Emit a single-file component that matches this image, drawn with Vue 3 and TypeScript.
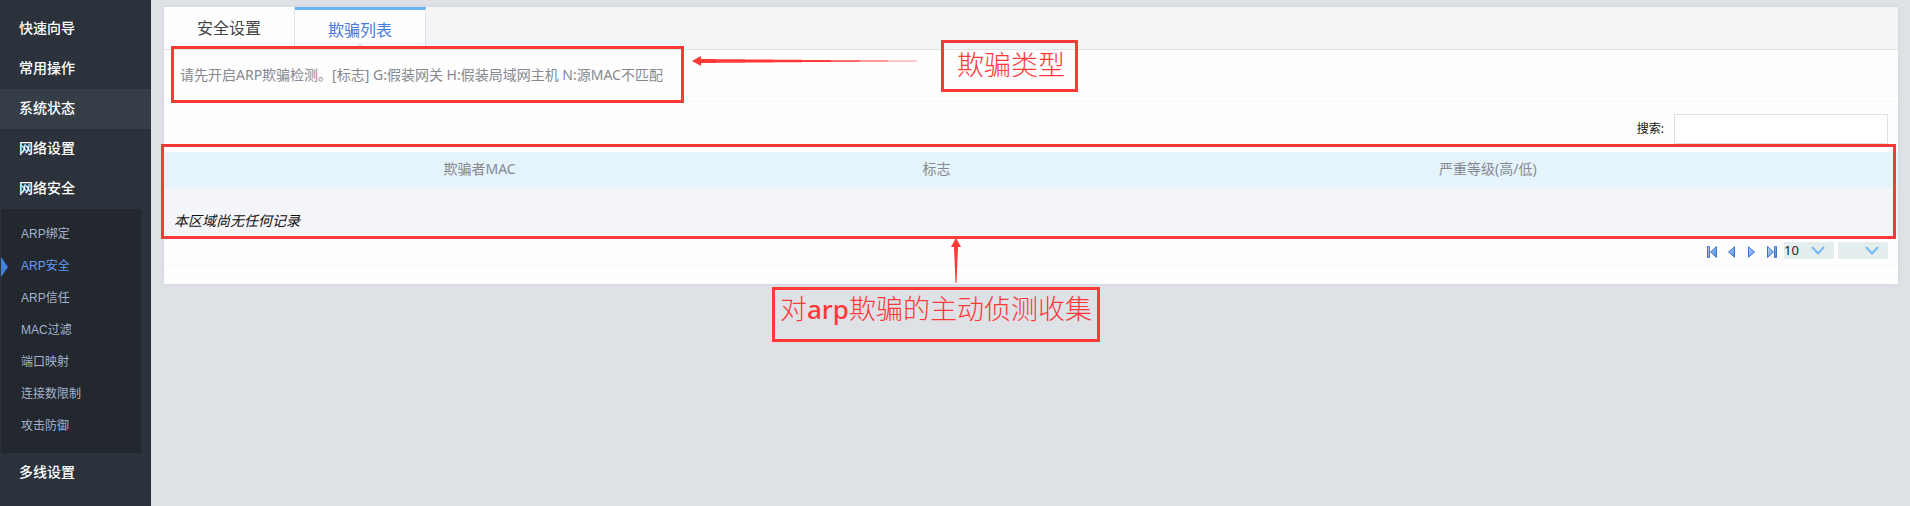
<script setup lang="ts">
import { ref } from 'vue'

interface MenuItem {
  label: string
  hover?: boolean
  children?: string[]
}

const menu: MenuItem[] = [
  { label: '快速向导' },
  { label: '常用操作' },
  { label: '系统状态', hover: true },
  { label: '网络设置' },
  {
    label: '网络安全',
    children: ['ARP绑定', 'ARP安全', 'ARP信任', 'MAC过滤', '端口映射', '连接数限制', '攻击防御'],
  },
  { label: '多线设置' },
]
const activeChild = ref('ARP安全')
const tabs = ['安全设置', '欺骗列表']
const activeTab = ref('欺骗列表')
const keyword = ref('')
const pageSize = ref('10')
const page = ref('')
</script>

<template>
  <div class="layout">
    <nav class="sidebar" aria-label="主菜单">
      <template v-for="item in menu" :key="item.label">
        <a href="#" class="menu-item" :class="{ hover: item.hover }">{{ item.label }}</a>
        <div v-if="item.children" class="submenu">
          <a
            v-for="child in item.children"
            :key="child"
            href="#"
            class="sub-item"
            :class="{ active: child === activeChild }"
            @click.prevent="activeChild = child"
          >{{ child }}</a>
        </div>
      </template>
    </nav>

    <main class="content">
      <section class="panel">
        <div class="tabs" role="tablist">
          <button
            v-for="tab in tabs"
            :key="tab"
            type="button"
            role="tab"
            class="tab"
            :class="{ active: tab === activeTab }"
            :aria-selected="tab === activeTab"
            @click="activeTab = tab"
          >{{ tab }}</button>
        </div>

        <div class="notice">
          <p>请先开启ARP欺骗检测。[标志] G:假装网关 H:假装局域网主机 N:源MAC不匹配</p>
          <div class="mark mark-notice"></div>
          <svg class="arrow-left" width="226" height="12" viewBox="0 0 226 12" aria-hidden="true">
            <path d="M0 6 9 1V4H24V8H9V11Z" fill="#ff3838" />
            <path d="M24 4H53V8H24Z" fill="#ff3838" opacity=".75" />
            <path d="M53 4H81V8H53Z" fill="#ff3838" opacity=".5" />
            <path d="M81 4H110V8H81Z" fill="#ff3838" opacity=".27" />
            <path d="M24 5H139V7H24Z" fill="#ff3838" />
            <path d="M139 5H168V7H139Z" fill="#ff3838" opacity=".75" />
            <path d="M168 5H196V7H168Z" fill="#ff3838" opacity=".5" />
            <path d="M196 5H225V7H196Z" fill="#ff3838" opacity=".27" />
          </svg>
          <div class="mark caption caption-type">欺骗类型</div>
        </div>

        <div class="search">
          <label for="search">搜索:</label>
          <input id="search" v-model="keyword" type="text" />
        </div>

        <div class="table-wrap">
          <table>
            <thead>
              <tr>
                <th class="col-mac">欺骗者MAC</th>
                <th class="col-flag">标志</th>
                <th class="col-level">严重等级(高/低)</th>
              </tr>
            </thead>
            <tbody>
              <tr>
                <td colspan="3">本区域尚无任何记录</td>
              </tr>
            </tbody>
          </table>
          <div class="mark mark-table"></div>
        </div>

        <div class="pager">
          <svg width="0" height="0" class="defs" aria-hidden="true">
            <defs>
              <linearGradient id="blue" x1="0" y1="0" x2="1" y2="1">
                <stop offset="0" stop-color="#c2dcf8" />
                <stop offset="1" stop-color="#4a86dc" />
              </linearGradient>
            </defs>
          </svg>
          <div class="steps">
            <button type="button" aria-label="首页">
              <svg width="12" height="12" viewBox="0 0 12 12">
                <path d="M1.500.5H3.500V11.500H1.500ZM10.500.5V11.500L4.500 6Z" />
              </svg>
            </button>
            <button type="button" aria-label="上一页">
              <svg width="12" height="12" viewBox="0 0 12 12">
                <path d="M8.500.8V11.200L2.500 6Z" />
              </svg>
            </button>
            <button type="button" aria-label="下一页">
              <svg width="12" height="12" viewBox="0 0 12 12">
                <path d="M2.500.8V11.200L8.500 6Z" />
              </svg>
            </button>
            <button type="button" aria-label="末页">
              <svg width="12" height="12" viewBox="0 0 12 12">
                <path d="M8.500.5H10.500V11.500H8.500ZM1.500.5V11.500L7.500 6Z" />
              </svg>
            </button>
          </div>
          <span class="select">
            <select v-model="pageSize" aria-label="每页条数">
              <option>10</option>
              <option>20</option>
            </select>
            <svg width="14" height="9" viewBox="0 0 14 9"><path d="M1 1 7 7.500 13 1" /></svg>
          </span>
          <span class="select">
            <select v-model="page" aria-label="页码">
              <option value=""></option>
            </select>
            <svg width="14" height="9" viewBox="0 0 14 9"><path d="M1 1 7 7.500 13 1" /></svg>
          </span>
          <svg class="arrow-up" width="12" height="46" viewBox="0 0 12 46" aria-hidden="true">
            <path d="M6 0 11 9H8L6.500 45H5.500L4 9H1Z" fill="#ff3838" />
          </svg>
        </div>
        <div class="mark caption caption-collect">对<b>arp</b>欺骗的主动侦测收集</div>
      </section>
    </main>
  </div>
</template>

<style>
body {
  background: #dee1e6;
}
</style>

<style scoped>
.layout {
  display: flex;
  min-height: 100vh;
  font-family: "Noto Sans", "Noto Sans CJK SC", sans-serif;
  font-size: 14px;
}
.sidebar {
  box-sizing: border-box;
  flex: none;
  width: 151px;
  padding-top: 9px;
  background: #2c323c;
}
.menu-item {
  display: block;
  padding: 0 0 2px 19px;
  line-height: 38px;
  font-weight: 500;
  color: #fff;
  text-decoration: none;
}
.menu-item.hover {
  background: #353e46;
}
.submenu {
  margin: 0 10px 0 1px;
  padding: 10px 0;
  background: #22282d;
}
.sub-item {
  position: relative;
  display: block;
  padding: 0 0 2px 20px;
  font-family: "Liberation Sans", "Noto Sans CJK SC", sans-serif;
  font-size: 12px;
  line-height: 30px;
  color: #a2b3d0;
  text-decoration: none;
}
.sub-item.active {
  color: #629cf8;
}
.sub-item.active::before {
  content: "";
  position: absolute;
  left: 0;
  top: 6px;
  border: solid transparent;
  border-width: 10px 0 10px 7px;
  border-left-color: #4180dc;
}
.content {
  flex: 1;
  min-width: 0;
  padding: 7px 12px 0 13px;
}
.panel {
  position: relative;
  padding-bottom: 18px;
  background: #fefefe;
  box-shadow: 0 0 5px rgba(0, 0, 0, 0.06);
}
.tabs {
  display: flex;
  height: 42px;
  border-bottom: 1px solid #dfe1e6;
  background: #f4f5f7;
}
.tab {
  box-sizing: border-box;
  width: 131px;
  padding: 0 0 2px;
  border: 0;
  border-right: 1px solid #dfe1e6;
  background: #fefefe;
  font: inherit;
  font-size: 16px;
  color: #444;
}
.tab.active {
  position: relative;
  border-top: 3px solid #68b2f0;
  color: #4a7bdc;
}
.tab.active::after {
  content: "";
  position: absolute;
  left: 59px;
  bottom: 0;
  border: solid transparent;
  border-width: 0 6px 6px;
  border-bottom-color: #e6e9ee;
}
.notice {
  position: relative;
  height: 51px;
  border-bottom: 1px solid #f6f6f8;
}
.notice p {
  margin: 0;
  padding-left: 16px;
  line-height: 50px;
  color: #85898f;
}
.mark {
  position: absolute;
  box-sizing: border-box;
  border: 3px solid #ff3838;
  pointer-events: none;
}
.mark-notice {
  left: 7px;
  top: -4px;
  width: 513px;
  height: 57px;
}
.mark-table {
  left: -3px;
  right: 2px;
  top: -8px;
  bottom: -3px;
}
.caption {
  font-size: 27px;
  font-weight: 300;
  color: #ff3838;
  white-space: nowrap;
}
.caption b {
  font-size: 26px;
  font-weight: 500;
}
.caption-type {
  left: 777px;
  top: -10px;
  width: 137px;
  height: 52px;
  padding-left: 13px;
  line-height: 44px;
}
.caption-collect {
  left: 608px;
  top: 280px;
  width: 328px;
  height: 55px;
  padding-left: 5px;
  line-height: 38px;
}
.arrow-left {
  position: absolute;
  left: 528px;
  top: 5px;
}
.arrow-up {
  position: absolute;
  left: 786px;
  top: 2px;
}
.search {
  display: flex;
  align-items: center;
  justify-content: flex-end;
  gap: 10px;
  padding: 12px 10px 8px;
  font-size: 12px;
  color: #111;
}
.search label {
  padding-bottom: 3px;
}
.search input {
  box-sizing: border-box;
  width: 214px;
  height: 30px;
  padding: 0 8px;
  border: 1px solid #dce0e6;
  background: #fff;
}
.table-wrap {
  position: relative;
}
table {
  width: 100%;
  table-layout: fixed;
  border-collapse: collapse;
}
th {
  box-sizing: border-box;
  height: 36px;
  padding: 0 0 2px;
  background: #e5f3fb;
  line-height: 20px;
  font-weight: 400;
  color: #85898f;
}
.col-mac {
  width: 36.4%;
}
.col-flag {
  width: 16.3%;
}
td {
  height: 20px;
  padding: 23px 10px 5px;
  background: #f4f5f8;
  line-height: 20px;
  font-style: italic;
  color: #111;
}
.pager {
  position: relative;
  display: flex;
  align-items: flex-start;
  justify-content: flex-end;
  padding: 6px 10px;
  height: 17px;
  border-bottom: 1px solid #f6f6f8;
}
.steps {
  display: flex;
  gap: 8px;
  padding: 4px 6px 0 0;
}
.steps button {
  width: 12px;
  height: 12px;
  padding: 0;
  border: 0;
  background: none;
}
.steps svg {
  display: block;
  fill: url(#blue);
  stroke: #3f76cc;
}
.defs {
  position: absolute;
}
.select {
  position: relative;
  width: 50px;
  height: 17px;
  background: #e5eeee;
}
.select + .select {
  margin-left: 4px;
}
.select select {
  display: block;
  width: 100%;
  height: 17px;
  padding: 0;
  border: 0;
  appearance: none;
  background: none;
  font: inherit;
  font-size: 13px;
  line-height: 17px;
  color: #222;
}
.select svg {
  position: absolute;
  right: 9px;
  top: 4px;
  fill: none;
  stroke: #74baf8;
  stroke-width: 2;
  pointer-events: none;
}
</style>
